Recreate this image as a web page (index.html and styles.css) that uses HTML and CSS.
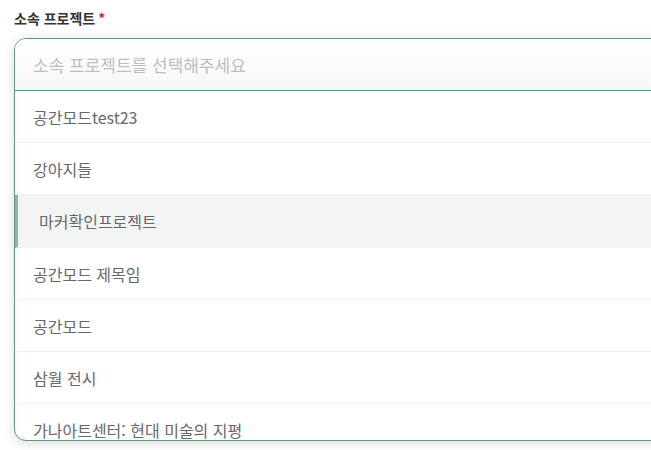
FILE: index.html
```html
<!DOCTYPE html>
<html lang="ko">
<head>
<meta charset="utf-8">
<link rel="stylesheet" href="styles.css">
</head>
<body>
<div class="field">
  <div class="label">소속 프로젝트<span class="req">*</span></div>
  <div class="select">
    <div class="input">소속 프로젝트를 선택해주세요</div>
    <ul class="list">
      <li class="item">공간모드test23</li>
      <li class="item">강아지들</li>
      <li class="item active">마커확인프로젝트</li>
      <li class="item">공간모드 제목임</li>
      <li class="item">공간모드</li>
      <li class="item">삼월 전시</li>
      <li class="item">가나아트센터: 현대 미술의 지평</li>
    </ul>
  </div>
</div>
</body>
</html>
```

FILE: styles.css
```css
html, body {
  margin: 0;
  padding: 0;
  background: #ffffff;
  overflow: hidden;
  width: 651px;
  height: 450px;
}
body {
  font-family: "Noto Sans CJK KR", "Noto Sans", sans-serif;
}
.field {
  padding: 9px 0 0 14px;
}
.label {
  font-size: 14px;
  font-weight: 700;
  color: #333;
  line-height: 19px;
  height: 19px;
}
.req {
  color: #e02424;
  margin-left: 3px;
}
.select {
  margin-top: 10px;
  width: 720px;
  height: 401px;
  border: 1.5px solid #5f9582;
  border-radius: 12px;
  box-shadow: 0 2px 12px rgba(0, 0, 0, 0.14);
  overflow: hidden;
  background: #fff;
}
.input {
  height: 52px;
  box-sizing: border-box;
  padding-left: 18px;
  font-size: 17px;
  line-height: 51px;
  color: #bcbfbf;
  background: linear-gradient(#ffffff, #f7f7f7);
  border-bottom: 1.5px solid #5f9582;
}
.list {
  list-style: none;
  margin: 0;
  padding: 0;
}
.item {
  height: 52.2px;
  box-sizing: border-box;
  border-bottom: 1px solid #f1f1f1;
  padding-left: 18px;
  font-size: 16px;
  line-height: 52px;
  color: #65696b;
}
.item.active {
  background: #f3f5f4;
  border-left: 3px solid #93b5a8;
  padding-left: 21px;
}
```
